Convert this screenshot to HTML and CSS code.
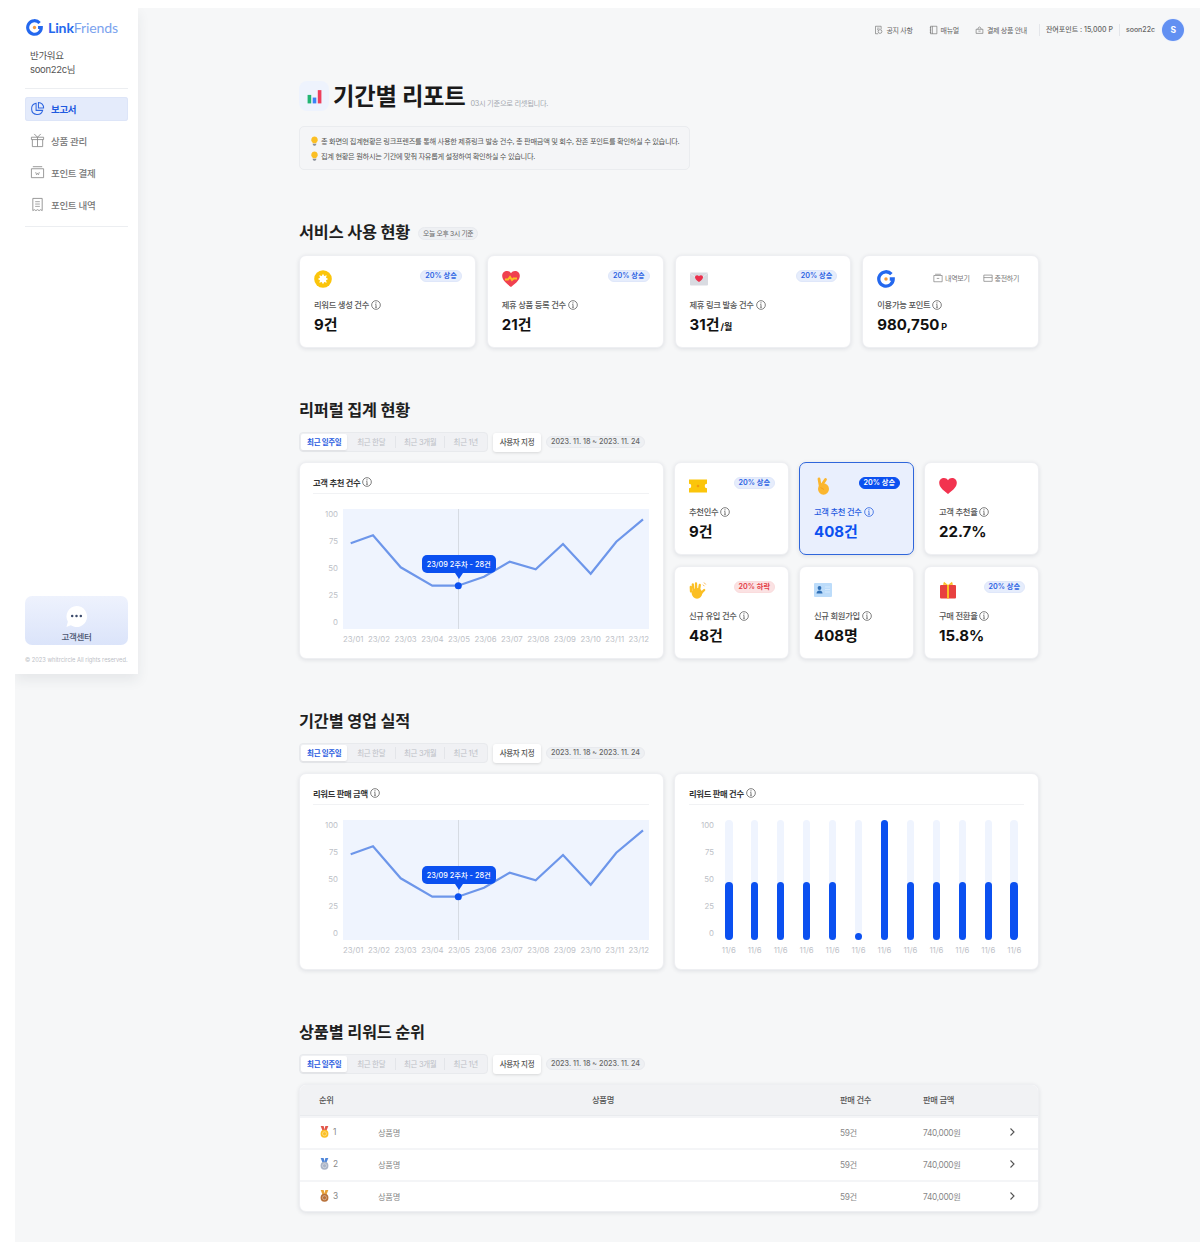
FILE: index.html
```html
<!DOCTYPE html>
<html lang="ko">
<head>
<meta charset="utf-8">
<title>기간별 리포트</title>
<link rel="stylesheet" href="styles.css">
</head>
<body>
<svg class="defs" width="0" height="0" aria-hidden="true">
  <symbol id="info" viewBox="0 0 12 12"><circle cx="6" cy="6" r="5.2" fill="none" stroke="currentColor" stroke-width=".9"/><path d="M6 5.2v3.6M5 8.8h2M5.2 5.2H6" fill="none" stroke="currentColor" stroke-width=".9"/><circle cx="6" cy="3.4" r=".65" fill="currentColor"/></symbol>
  <symbol id="g" viewBox="0 0 24 24"><path d="M19.2 5.6A9.6 9.600 0 1 0 21.600 12H17" fill="none" stroke="#2468ee" stroke-width="4.4"/><circle cx="12" cy="12" r="2.3" fill="#f59a3c"/></symbol>
  <symbol id="bulb" viewBox="0 0 10 12"><path d="M5 .6a3.9 3.9 0 0 1 2.4 7v1H2.6v-1A3.9 3.9 0 0 1 5 .6z" fill="#fbbf24"/><path d="M3 9.2h4v1.3L5.8 11.6H4.2L3 10.5z" fill="#8a8f9a"/></symbol>
  <symbol id="chev" viewBox="0 0 10 10"><path d="M3.5 1.5 7 5 3.5 8.500" fill="none" stroke="#555" stroke-width="1.1"/></symbol>
  <symbol id="medal" viewBox="0 0 12 14"><path d="M1.500 0h3.500l1.500 6h-2.500zM10.500 0H7L5.500 6H8z" fill="currentColor"/><circle cx="6" cy="9" r="4.6" fill="var(--m, #fbbf24)"/><circle cx="6" cy="9" r="2.4" fill="none" stroke="rgba(255,255,255,.55)" stroke-width=".8"/></symbol>
</svg>
<div class="app">
  <aside class="sidebar">
    <div class="logo">
      <svg class="logo-mark"><use href="#g"/></svg>
      <span class="logo-text"><b>Link</b>Friends</span>
    </div>
    <p class="greet">반가워요<br>soon22c님</p>
    <nav class="nav">
      <a class="nav-item active">
        <svg viewBox="0 0 16 16"><path d="M6.500 2.500a6 6 0 1 0 7 7.500H6.500z" fill="none" stroke="currentColor" stroke-width="1.1"/><path d="M9 1.500a5.500 5.500 0 0 1 5.500 6H9z" fill="none" stroke="currentColor" stroke-width="1.1"/></svg>
        보고서
      </a>
      <a class="nav-item">
        <svg viewBox="0 0 16 16"><path d="M2.500 7v7.500h11V7M1.500 4.500h13V7h-13zM8 4.500v10M4.500 1l3.500 3.500L11.500 1" fill="none" stroke="currentColor" stroke-width=".9"/></svg>
        상품 관리
      </a>
      <a class="nav-item">
        <svg viewBox="0 0 16 16"><path d="M3 1.800h10M1.500 4h13v9.500h-13z" fill="none" stroke="currentColor" stroke-width=".9"/><path d="M5 7.500 6 10.500 7 8.500 8 10.500 9 7.500" transform="translate(1 0)" fill="none" stroke="currentColor" stroke-width=".7"/></svg>
        포인트 결제
      </a>
      <a class="nav-item">
        <svg viewBox="0 0 16 16"><path d="M3 1.500h10v13l-1.600-1-1.700 1-1.700-1-1.700 1-1.700-1-1.600 1z" fill="none" stroke="currentColor" stroke-width=".9"/><path d="M5.500 5h5M5.500 7.500h5M5.500 10h5" stroke="currentColor" stroke-width=".8"/></svg>
        포인트 내역
      </a>
    </nav>
    <div class="help">
      <svg class="help-icon" viewBox="0 0 24 24"><path d="M12 1a11 11 0 1 1-6 20.200L1.500 23 3 17.500A11 11 0 0 1 12 1z" fill="#fff"/><circle cx="7.500" cy="11.500" r="1.300" fill="#3b4a6b"/><circle cx="12" cy="11.500" r="1.300" fill="#3b4a6b"/><circle cx="16.500" cy="11.500" r="1.300" fill="#3b4a6b"/></svg>
      <span>고객센터</span>
    </div>
    <p class="copy">© 2023 whitrcircle All rights reserved.</p>
  </aside>

  <main class="main">
    <header class="topbar">
      <a class="top-link"><svg viewBox="0 0 12 12"><path d="M9.500 5V1H2v10h3.500" fill="none" stroke="currentColor" stroke-width=".8"/><circle cx="8" cy="8" r="2.500" fill="none" stroke="currentColor" stroke-width=".8"/><path d="M4 3.500h3.500M4 5.500h2" stroke="currentColor" stroke-width=".7"/></svg>공지 사항</a>
      <a class="top-link l2"><svg viewBox="0 0 12 12"><path d="M2 1h8.500v10H2zM4.500 1v10M1 3h2M1 6h2M1 9h2" fill="none" stroke="currentColor" stroke-width=".8"/></svg>매뉴얼</a>
      <a class="top-link l3"><svg viewBox="0 0 12 12"><path d="M1.500 5h9v5.500h-9zM4 5c0-4 4-4 4 0M4.500 7.500h3" fill="none" stroke="currentColor" stroke-width=".8"/></svg>결제 상품 안내</a>
      <span class="top-meta first">잔여포인트 : 15,000 P</span>
      <span class="top-meta">soon22c</span>
      <span class="avatar">S</span>
    </header>

    <div class="page-head">
      <span class="page-icon"><svg viewBox="0 0 16 16"><rect x="1.500" y="6.500" width="3.400" height="8" fill="#22b573"/><rect x="6.300" y="9" width="3.400" height="5.500" fill="#3b82f6"/><rect x="11.100" y="2" width="3.400" height="12.500" fill="#ee3f5c"/></svg></span>
      <h1>기간별 리포트</h1>
      <span class="page-sub">03시 기준으로 리셋됩니다.</span>
    </div>

    <div class="notice">
      <p><svg class="bulb"><use href="#bulb"/></svg>총 화면의 집계현황은 링크프렌즈를 통해 사용한 제휴링크 발송 건수, 총 판매금액 및 회수, 잔존 포인트를 확인하실 수 있습니다.</p>
      <p><svg class="bulb"><use href="#bulb"/></svg>집계 현황은 원하시는 기간에 맞춰 자유롭게 설정하여 확인하실 수 있습니다.</p>
    </div>

    <section class="section">
      <div class="sec-head"><h2>서비스 사용 현황</h2><span class="pill">오늘 오후 3시 기준</span></div>
      <div class="grid-4">
        <div class="card stat">
          <div class="stat-top">
            <svg class="ic" viewBox="0 0 18 18"><circle cx="9" cy="9" r="8.800" fill="#fbc50b"/><path d="M9 3.800 10.200 6 12.700 5.300 12 7.800 14.200 9 12 10.200 12.700 12.700 10.200 12 9 14.200 7.800 12 5.300 12.700 6 10.200 3.800 9 6 7.800 5.300 5.300 7.800 6z" fill="#fff"/></svg>
            <span class="badge">20% 상승</span>
          </div>
          <div class="stat-label">리워드 생성 건수<svg class="i"><use href="#info"/></svg></div>
          <div class="stat-value">9건</div>
        </div>
        <div class="card stat">
          <div class="stat-top">
            <svg class="ic" viewBox="0 0 18 18"><path d="M9 17C3 12.500.2 9.500.2 5.800.2 3 2.400 1 5 1c1.700 0 3.100.8 4 2.300C9.900 1.800 11.300 1 13 1c2.600 0 4.800 2 4.800 4.800C17.800 9.500 15 12.500 9 17z" fill="#f0414f"/><path d="M3 9.500h3l2-2.500 2 3 1.500-1.500H15" fill="none" stroke="#fbbf24" stroke-width="2"/></svg>
            <span class="badge">20% 상승</span>
          </div>
          <div class="stat-label">제휴 상품 등록 건수<svg class="i"><use href="#info"/></svg></div>
          <div class="stat-value">21건</div>
        </div>
        <div class="card stat">
          <div class="stat-top">
            <svg class="ic" viewBox="0 0 18 18"><rect y="2.500" width="18" height="13" rx="1" fill="#d9dbe1"/><path d="M0 3l9 7 9-7" fill="none" stroke="#eceef1" stroke-width=".8"/><path d="M9 12C6.300 10 5 8.700 5 7.200 5 6 6 5.200 7 5.200c.8 0 1.500.4 2 1 .5-.6 1.200-1 2-1 1 0 2 .8 2 2 0 1.500-1.300 2.800-4 4.800z" fill="#ec2f4b"/></svg>
            <span class="badge">20% 상승</span>
          </div>
          <div class="stat-label">제휴 링크 발송 건수<svg class="i"><use href="#info"/></svg></div>
          <div class="stat-value">31건<small>/월</small></div>
        </div>
        <div class="card stat">
          <div class="stat-top">
            <svg class="ic"><use href="#g"/></svg>
            <span class="mini-links">
              <a><svg viewBox="0 0 12 12"><path d="M1 3h10v7.500H1zM2.500 1.500h7M4.500 6.500h3" fill="none" stroke="currentColor" stroke-width=".8"/></svg>내역보기</a>
              <a><svg viewBox="0 0 12 12"><path d="M1 2.500h10v7.500H1zM1 5.500h10" fill="none" stroke="currentColor" stroke-width=".8"/></svg>충전하기</a>
            </span>
          </div>
          <div class="stat-label">이용가능 포인트<svg class="i"><use href="#info"/></svg></div>
          <div class="stat-value">980,750<small class="p">P</small></div>
        </div>
      </div>
    </section>

    <section class="section">
      <div class="sec-head"><h2>리퍼럴 집계 현황</h2></div>
      <div class="filters">
        <div class="tabs"><span class="tab t1 on">최근 일주일</span><span class="tab t2">최근 한달</span><span class="tab t3">최근 3개월</span><span class="tab t4">최근 1년</span></div>
        <span class="custom">사용자 지정</span>
        <span class="date">2023. 11. 18 ~ 2023. 11. 24</span>
      </div>
      <div class="grid-ref">
        <div class="card chart tall">
          <div class="chart-title">고객 추천 건수<svg class="i"><use href="#info"/></svg></div>
          <div class="chart-body">
            <div class="y-axis"><span>100</span><span>75</span><span>50</span><span>25</span><span>0</span></div>
            <div class="plot">
              <svg viewBox="0 0 306 120" width="306" height="120"><path d="M115.500 0V120" stroke="#cfd4dc" stroke-width=".8"/><polyline points="7.700,34.300 30,26.300 57.700,58.300 89.300,76.700 115,76.700 141,67.700 166.700,52.700 192.700,60.300 220,35 247.700,64.700 273.300,32.700 300,10.300" fill="none" stroke="#6d96ea" stroke-width="2.200"/><circle cx="115.300" cy="76.700" r="3.500" fill="#0b50f0"/></svg>
              <span class="tip">23/09 2주차 - 28건</span>
            </div>
            <div class="x-axis"><span>23/01</span><span>23/02</span><span>23/03</span><span>23/04</span><span>23/05</span><span>23/06</span><span>23/07</span><span>23/08</span><span>23/09</span><span>23/10</span><span>23/11</span><span>23/12</span></div>
          </div>
        </div>
        <div class="card stat">
          <div class="stat-top">
            <svg class="ic" viewBox="0 0 18 18"><path d="M0 2.500h18v4.200a2.300 2.300 0 0 0 0 4.600v4.200H0v-4.200a2.300 2.300 0 0 0 0-4.600z" fill="#fbc50b"/><circle cx="9" cy="9" r="1.300" fill="#f59a0b"/></svg>
            <span class="badge">20% 상승</span>
          </div>
          <div class="stat-label">추천인수<svg class="i"><use href="#info"/></svg></div>
          <div class="stat-value">9건</div>
        </div>
        <div class="card stat selected">
          <div class="stat-top">
            <svg class="ic" viewBox="0 0 18 18"><ellipse cx="9.500" cy="12" rx="5.500" ry="5.800" fill="#fbb62f"/><path d="M6.200 9 5 2M6.800 9.500 11.500 2.500" stroke="#fbb62f" stroke-width="2.800" stroke-linecap="round"/><path d="M6.500 10.500 10 12.500" stroke="#f09a1a" stroke-width=".8"/></svg>
            <span class="badge solid">20% 상승</span>
          </div>
          <div class="stat-label">고객 추천 건수<svg class="i"><use href="#info"/></svg></div>
          <div class="stat-value">408건</div>
        </div>
        <div class="card stat">
          <div class="stat-top">
            <svg class="ic" viewBox="0 0 18 18"><path d="M9 17C3 12.500.2 9.500.2 5.800.2 3 2.400 1 5 1c1.700 0 3.100.8 4 2.300C9.900 1.800 11.300 1 13 1c2.600 0 4.800 2 4.800 4.800C17.800 9.500 15 12.500 9 17z" fill="#f2334f"/></svg>
          </div>
          <div class="stat-label">고객 추천율<svg class="i"><use href="#info"/></svg></div>
          <div class="stat-value">22.7%</div>
        </div>
        <div class="card stat">
          <div class="stat-top">
            <svg class="ic" viewBox="0 0 18 18"><ellipse cx="8" cy="12.300" rx="5.300" ry="5.400" fill="#fbbf24"/><path d="M2 10.500 1.800 6M4.500 9 3.800 3.500M7.200 8.500 7 2.500M10 9 10.800 4M12 12.300 15.200 9" stroke="#fbbf24" stroke-width="2.300" stroke-linecap="round"/><path d="M15 1.500 16.800 3.500M14 3.700 15.400 5.200" stroke="#f59a0b" stroke-width=".7"/></svg>
            <span class="badge down">20% 하락</span>
          </div>
          <div class="stat-label">신규 유입 건수<svg class="i"><use href="#info"/></svg></div>
          <div class="stat-value">48건</div>
        </div>
        <div class="card stat">
          <div class="stat-top">
            <svg class="ic" viewBox="0 0 18 18"><rect y="2" width="18" height="14" rx="1" fill="#bcdcfa"/><circle cx="5.500" cy="7" r="1.900" fill="#2f6fb5"/><path d="M2.500 12.500c0-4 6-4 6 0z" fill="#2f6fb5"/><path d="M11 6h5M11 8.500h5M11 11h5" stroke="#dcecfc" stroke-width=".8"/></svg>
          </div>
          <div class="stat-label">신규 회원가입<svg class="i"><use href="#info"/></svg></div>
          <div class="stat-value">408명</div>
        </div>
        <div class="card stat">
          <div class="stat-top">
            <svg class="ic" viewBox="0 0 18 18"><rect x="1" y="4" width="16" height="13.500" rx="1" fill="#e8403f"/><path d="M8 4h2v13.500H8z" fill="#fbbf24"/><path d="M9 4 5 .8 4 3.800zM9 4l4-3.200 1 3z" fill="#fbbf24"/></svg>
            <span class="badge">20% 상승</span>
          </div>
          <div class="stat-label">구매 전환율<svg class="i"><use href="#info"/></svg></div>
          <div class="stat-value">15.8%</div>
        </div>
      </div>
    </section>

    <section class="section">
      <div class="sec-head"><h2>기간별 영업 실적</h2></div>
      <div class="filters">
        <div class="tabs"><span class="tab t1 on">최근 일주일</span><span class="tab t2">최근 한달</span><span class="tab t3">최근 3개월</span><span class="tab t4">최근 1년</span></div>
        <span class="custom">사용자 지정</span>
        <span class="date">2023. 11. 18 ~ 2023. 11. 24</span>
      </div>
      <div class="grid-2">
        <div class="card chart">
          <div class="chart-title">리워드 판매 금액<svg class="i"><use href="#info"/></svg></div>
          <div class="chart-body">
            <div class="y-axis"><span>100</span><span>75</span><span>50</span><span>25</span><span>0</span></div>
            <div class="plot">
              <svg viewBox="0 0 306 120" width="306" height="120"><path d="M115.500 0V120" stroke="#cfd4dc" stroke-width=".8"/><polyline points="7.700,34.300 30,26.300 57.700,58.300 89.300,76.700 115,76.700 141,67.700 166.700,52.700 192.700,60.300 220,35 247.700,64.700 273.300,32.700 300,10.300" fill="none" stroke="#6d96ea" stroke-width="2.200"/><circle cx="115.300" cy="76.700" r="3.500" fill="#0b50f0"/></svg>
              <span class="tip">23/09 2주차 - 28건</span>
            </div>
            <div class="x-axis"><span>23/01</span><span>23/02</span><span>23/03</span><span>23/04</span><span>23/05</span><span>23/06</span><span>23/07</span><span>23/08</span><span>23/09</span><span>23/10</span><span>23/11</span><span>23/12</span></div>
          </div>
        </div>
        <div class="card chart bar-card">
          <div class="chart-title">리워드 판매 건수<svg class="i"><use href="#info"/></svg></div>
          <div class="chart-body bars-body">
            <div class="y-axis"><span>100</span><span>75</span><span>50</span><span>25</span><span>0</span></div>
            <div class="bars">
              <i class="bar"><b style="height:48%"></b></i><i class="bar"><b style="height:48%"></b></i><i class="bar"><b style="height:48%"></b></i><i class="bar"><b style="height:48%"></b></i><i class="bar"><b style="height:48%"></b></i><i class="bar"><b style="height:6%"></b></i><i class="bar"><b style="height:100%"></b></i><i class="bar"><b style="height:48%"></b></i><i class="bar"><b style="height:48%"></b></i><i class="bar"><b style="height:48%"></b></i><i class="bar"><b style="height:48%"></b></i><i class="bar"><b style="height:48%"></b></i>
            </div>
            <div class="bar-labels"><span>11/6</span><span>11/6</span><span>11/6</span><span>11/6</span><span>11/6</span><span>11/6</span><span>11/6</span><span>11/6</span><span>11/6</span><span>11/6</span><span>11/6</span><span>11/6</span></div>
          </div>
        </div>
      </div>
    </section>

    <section class="section">
      <div class="sec-head"><h2>상품별 리워드 순위</h2></div>
      <div class="filters">
        <div class="tabs"><span class="tab t1 on">최근 일주일</span><span class="tab t2">최근 한달</span><span class="tab t3">최근 3개월</span><span class="tab t4">최근 1년</span></div>
        <span class="custom">사용자 지정</span>
        <span class="date">2023. 11. 18 ~ 2023. 11. 24</span>
      </div>
      <div class="card rank">
        <div class="row head"><span>순위</span><span class="center">상품명</span><span>판매 건수</span><span>판매 금액</span><span></span></div>
        <div class="row"><span class="pos"><svg class="gold"><use href="#medal"/></svg>1</span><span>상품명</span><span>59건</span><span>740,000원</span><svg class="chev"><use href="#chev"/></svg></div>
        <div class="row"><span class="pos"><svg class="silver"><use href="#medal"/></svg>2</span><span>상품명</span><span>59건</span><span>740,000원</span><svg class="chev"><use href="#chev"/></svg></div>
        <div class="row"><span class="pos"><svg class="bronze"><use href="#medal"/></svg>3</span><span>상품명</span><span>59건</span><span>740,000원</span><svg class="chev"><use href="#chev"/></svg></div>
      </div>
    </section>
  </main>
</div>
</body>
</html>
```

FILE: styles.css
```css
* { box-sizing: border-box; margin: 0; padding: 0; }
html, body { background: #fff; }
body {
  margin: 8px 0 0 15px;
  font-family: Inter, "Noto Sans CJK KR", "Noto Sans", sans-serif;
  color: #222;
  letter-spacing: -0.02em;
}
.defs { position: absolute; }
.app { display: flex; background: #f6f7f8; height: 1234px; overflow: hidden; }

.sidebar {
  flex: 0 0 123px;
  height: 666px;
  background: #fff;
  padding: 9px 10px 0;
  display: flex;
  flex-direction: column;
  box-shadow: 0 6px 12px rgba(40, 50, 70, .08);
}
.logo { display: flex; align-items: center; gap: 5px; height: 20px; padding-left: 1px; }
.logo-mark { width: 17px; height: 17px; }
.logo-text { font-family: Lato, sans-serif; font-size: 14.1px; color: #7ba3ee; letter-spacing: -0.01em; }
.logo-text b { color: #2468ee; font-weight: 700; }
.greet { margin: 12px 0 0 5px; font-size: 9.5px; line-height: 14px; color: #555; padding-bottom: 11px; }
.nav {
  border-top: 1px solid #eceef1;
  border-bottom: 1px solid #eceef1;
  padding: 8px 0 9px;
  display: flex;
  flex-direction: column;
  gap: 8px;
}
.nav-item {
  height: 24px;
  display: flex;
  align-items: center;
  gap: 6px;
  padding-left: 5px;
  padding-bottom: 1px;
  font-size: 9.5px;
  color: #777;
  font-weight: 500;
  border-radius: 3px;
}
.nav-item svg { width: 15px; height: 15px; color: #888; }
.nav-item.active { background: #e4ebfb; color: #1f5ae0; font-weight: 700; box-shadow: inset 0 0 0 1px #dde5f8; }
.nav-item.active svg { color: #2f66e0; }
.help {
  margin-top: auto;
  height: 49px;
  border-radius: 7px;
  background: linear-gradient(180deg, #eef2fd, #dbe4fa);
  display: flex;
  flex-direction: column;
  align-items: center;
  padding-top: 9px;
  font-size: 8.5px;
  font-weight: 500;
  color: #4b5570;
  gap: 2px;
}
.help-icon { width: 23px; height: 23px; }
.copy { font-size: 5.7px; color: #bcc0c6; margin: 11px 0 10px; white-space: nowrap; letter-spacing: 0; line-height: 8px; }

.main { flex: 1; padding: 0 16px 0 161px; min-width: 0; }
.topbar { height: 44px; display: flex; align-items: center; justify-content: flex-end; font-size: 7px; color: #666; margin-left: -100px; }
.top-link { display: flex; align-items: center; gap: 3px; margin-right: 16px; white-space: nowrap; }
.top-link svg { width: 9px; height: 10px; color: #666; }
.top-link.l3 { margin-right: 12px; }
.top-meta { padding-left: 6px; margin-right: 6px; border-left: 1px solid #e4e6ea; line-height: 12px; font-weight: 500; white-space: nowrap; letter-spacing: 0; }
.avatar { width: 22px; height: 22px; border-radius: 50%; background: #6290f2; color: #fff; font-size: 8.5px; font-weight: 700; display: flex; align-items: center; justify-content: center; margin-left: 1px; box-shadow: 0 0 0 1px #eef2fb; }

.page-head { margin-top: 29px; display: flex; align-items: center; height: 30px; width: 740px; }
.page-icon { width: 30px; height: 30px; border-radius: 8px; background: #eef3fd; display: flex; align-items: center; justify-content: center; flex: none; }
.page-icon svg { width: 17px; height: 17px; }
h1 { font-size: 23.3px; font-weight: 700; color: #1a1a1a; margin: 2px 0 0 4px; letter-spacing: -0.01em; line-height: 30px; white-space: nowrap; }
.page-sub { font-size: 7.3px; color: #a5a9b0; margin: 13px 0 0 5px; white-space: nowrap; }

.notice { margin-top: 15px; width: 391px; height: 44px; border: 1px solid #eaecef; border-radius: 5px; background: #f4f5f7; padding: 7px 10px 0; font-size: 7.25px; color: #555; white-space: nowrap; }
.notice p { display: flex; align-items: center; height: 14.5px; gap: 2px; }
.bulb { width: 9px; height: 10px; flex: none; }

.section { width: 740px; margin-top: 52px; }
.sec-head { display: flex; align-items: center; gap: 8px; height: 20px; }
h2 { font-size: 16.3px; font-weight: 700; color: #1f1f1f; line-height: 20px; letter-spacing: -0.01em; white-space: nowrap; }
.pill { font-size: 6.8px; color: #666; background: #eef0f3; border: 1px solid #e8eaee; padding: 0 4px; height: 13px; line-height: 11px; border-radius: 7px; white-space: nowrap; margin-top: 3px; }

.card { background: #fff; border-radius: 7px; border: 1px solid #eeeff2; box-shadow: 0 1px 4px rgba(30, 40, 60, .11); }
.grid-4 { margin-top: 13px; display: grid; grid-template-columns: repeat(4, 1fr); gap: 11px; }
.stat { height: 93px; padding: 13px 13px 13px 14px; }
.stat-top { height: 20px; display: flex; justify-content: space-between; align-items: flex-start; }
.ic { width: 18px; height: 18px; margin-top: 1px; display: block; }
.badge { font-size: 7.2px; font-weight: 600; color: #2b62e3; background: #e6edfc; border: 1px solid #dfe7fa; height: 12.5px; line-height: 10.5px; padding: 0 4px; margin-top: .5px; border-radius: 7px; white-space: nowrap; letter-spacing: 0; }
.badge.solid { background: #0b50f0; color: #fff; border-color: #0b50f0; }
.badge.down { background: #fbe2e3; color: #e33a43; border-color: #fadcdd; }
.stat-label { margin-top: 10px; font-size: 8.3px; color: #555; height: 12px; line-height: 12px; display: flex; align-items: center; font-weight: 500; white-space: nowrap; }
.i { width: 10px; height: 10px; margin-left: 2px; color: #555; flex: none; }
.stat-value { margin-top: 4px; font-size: 15px; font-weight: 700; line-height: 20px; color: #111; letter-spacing: 0; white-space: nowrap; }
.stat-value small { font-size: 9px; margin-left: 1px; }
.stat-value small.p { margin-left: 2px; }
.selected { background: #e9effd; border: 1.5px solid #2f66db; }
.selected .stat-label, .selected .i { color: #1f5ae0; }
.selected .stat-value { color: #0b50f0; }
.mini-links { display: flex; gap: 13px; font-size: 7px; color: #777; padding-top: 4px; padding-right: 6px; }
.mini-links a { display: flex; align-items: center; gap: 2px; white-space: nowrap; }
.mini-links svg { width: 10px; height: 10px; }

.filters { margin-top: 12px; display: flex; align-items: center; height: 20px; }
.tabs { display: flex; align-items: center; width: 189px; height: 20px; background: #f0f1f4; border: 1px solid #e8eaed; border-radius: 4px; padding: 0 1px; font-size: 7.5px; color: #bcc0c6; }
.tab { display: flex; align-items: center; justify-content: center; white-space: nowrap; border-left: 1px solid #e3e5e9; height: 12px; padding-bottom: 1px; }
.t1 { width: 47px; border-left: 0; }
.t2 { width: 48px; border-left: 0; }
.t3 { width: 50px; }
.t4 { width: 42px; }
.tab.on { height: 16px; background: #fff; border-radius: 2px; color: #1f5ae0; font-weight: 700; box-shadow: 0 1px 2px rgba(0, 0, 0, .08); }
.custom { margin-left: 5px; width: 48px; height: 19px; padding-bottom: 1px; background: #fff; border-radius: 3px; font-size: 7.5px; font-weight: 500; color: #555; display: flex; align-items: center; justify-content: center; box-shadow: 0 1px 3px rgba(0, 0, 0, .13); white-space: nowrap; }
.date { margin-left: 5px; width: 99px; height: 12px; line-height: 10px; background: #eef0f3; border: 1px solid #e8eaee; border-radius: 6px; font-size: 7.2px; font-weight: 500; color: #666; text-align: center; white-space: nowrap; letter-spacing: 0; }

.grid-ref { margin-top: 10px; display: grid; grid-template-columns: 365px repeat(3, 115px); grid-template-rows: 93px 93px; gap: 11px 10px; }
.tall { grid-row: span 2; }
.grid-2 { margin-top: 10px; display: grid; grid-template-columns: 365px 365px; gap: 10px; }
.chart { height: 197px; padding: 12px 14px 0 13px; }
.bar-card { padding-left: 14px; }
.chart-title { height: 19px; font-size: 8.3px; font-weight: 600; color: #333; display: flex; align-items: center; border-bottom: 1px solid #f1f2f4; padding-bottom: 5px; white-space: nowrap; }
.chart-body { margin-top: 15px; display: grid; grid-template-columns: 30px 306px; grid-template-rows: 120px 12px; row-gap: 4px; }
.y-axis { display: flex; flex-direction: column; gap: 17px; align-items: flex-end; padding-right: 5px; font-size: 7.8px; color: #bdc1c7; letter-spacing: 0; }
.y-axis span { height: 10px; line-height: 10px; }
.plot { position: relative; background: #eff4fe; height: 120px; width: 306px; }
.plot svg { display: block; }
.tip { position: absolute; left: 78.7px; top: 46px; width: 74px; height: 17.5px; background: #0b50f0; color: #fff; border-radius: 5px; font-size: 7.3px; font-weight: 500; display: flex; align-items: center; justify-content: center; white-space: nowrap; letter-spacing: 0; }
.tip::after { content: ""; position: absolute; left: 33px; top: 100%; border: 4px solid transparent; border-top: 6px solid #0b50f0; border-bottom: 0; }
.x-axis { grid-column: 2; display: flex; justify-content: space-between; font-size: 7.8px; line-height: 12px; color: #bdc1c7; letter-spacing: 0; }

.bars-body { grid-template-columns: 25px 293px; column-gap: 11px; }
.bars-body .y-axis { padding-right: 0; }
.bars { display: flex; justify-content: space-between; height: 120px; }
.bar { display: flex; align-items: flex-end; width: 7.5px; height: 120px; background: #eff4fe; border-radius: 4px; }
.bar b { display: block; width: 100%; min-height: 7.5px; background: #0b50f0; border-radius: 4px; }
.bar-labels { grid-column: 2; display: flex; justify-content: space-between; font-size: 7.8px; line-height: 12px; color: #bdc1c7; letter-spacing: 0; }
.bar-labels span { width: 7.5px; display: flex; justify-content: center; white-space: nowrap; }

.rank { margin-top: 10px; width: 740px; height: 128px; overflow: hidden; }
.row { height: 32px; display: grid; grid-template-columns: 59px 462px 83px 1fr 10px; align-items: center; padding: 0 21px 2px 19px; font-size: 8.3px; color: #888; border-top: 2px solid #f4f5f7; white-space: nowrap; }
.row.head { height: 31px; background: #f1f2f4; border-top: 0; border-bottom: 1px solid #e9ebee; color: #555; font-weight: 500; }
.center { text-align: center; padding-right: 12px; }
.pos { display: flex; align-items: center; gap: 3px; }
.pos svg { width: 11px; height: 12px; }
.gold { color: #e2574c; --m: #fbbf24; }
.silver { color: #4f86d9; --m: #aab4c6; }
.bronze { color: #e8a33a; --m: #b8713a; }
.chev { width: 10px; height: 10px; }
```
